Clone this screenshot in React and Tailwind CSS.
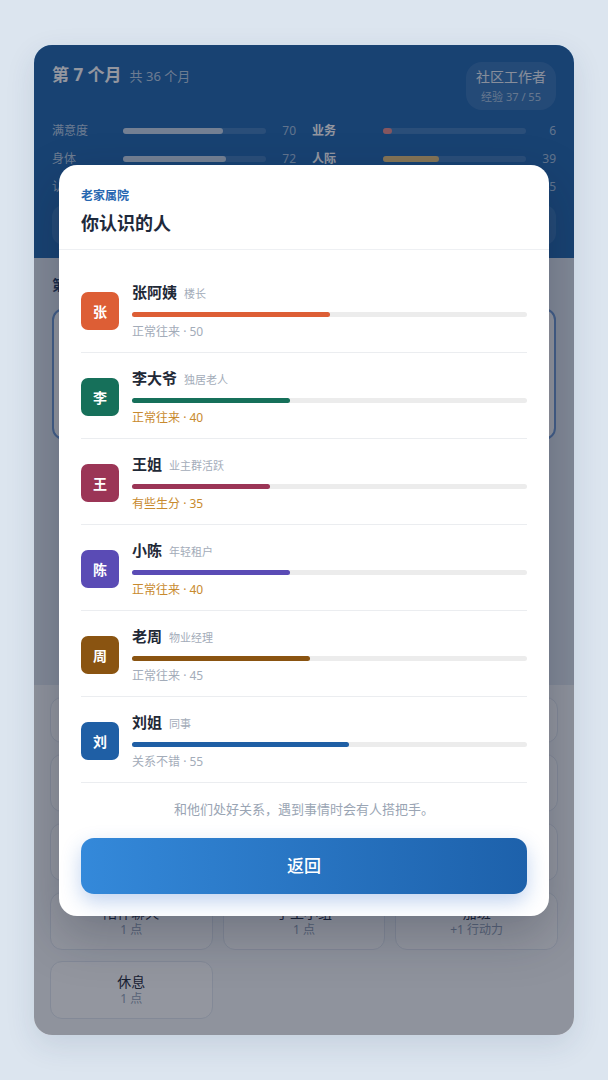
import React from "react";

const people = [
  { ch: "张", name: "张阿姨", role: "楼长", color: "#dd5e35", v: 50, status: "正常往来", warn: false },
  { ch: "李", name: "李大爷", role: "独居老人", color: "#16705a", v: 40, status: "正常往来", warn: true },
  { ch: "王", name: "王姐", role: "业主群活跃", color: "#9b3556", v: 35, status: "有些生分", warn: true },
  { ch: "陈", name: "小陈", role: "年轻租户", color: "#5a4bb5", v: 40, status: "正常往来", warn: true },
  { ch: "周", name: "老周", role: "物业经理", color: "#8a5411", v: 45, status: "正常往来", warn: false },
  { ch: "刘", name: "刘姐", role: "同事", color: "#1f5fa5", v: 55, status: "关系不错", warn: false },
];

const stats = [
  { l: "满意度", v: 70, fill: "bg-white/70", bold: false },
  { l: "业务", v: 6, fill: "bg-[#e58a8a]", bold: true },
  { l: "身体", v: 72, fill: "bg-white/70", bold: false },
  { l: "人际", v: 39, fill: "bg-[#e3c27a]", bold: true },
  { l: "认可", v: 60, fill: "bg-white/70", bold: false },
  { l: "心情", v: 45, fill: "bg-white/70", bold: true },
];

const actions = [
  ["走访居民", "1 点", "h-[46px]"],
  ["处理投诉", "1 点", "h-[46px]"],
  ["整理台账", "1 点", "h-[46px]"],
  ["组织活动", "2 点", "h-[58px]"],
  ["上门调解", "1 点", "h-[58px]"],
  ["环境整治", "1 点", "h-[58px]"],
  ["参加培训", "1 点", "h-[58px]"],
  ["政策宣传", "1 点", "h-[58px]"],
  ["写材料", "1 点", "h-[58px]"],
  ["陪伴聊天", "1 点", "h-[58px]"],
  ["手工小组", "1 点", "h-[58px]"],
  ["加班", "+1 行动力", "h-[58px]"],
  ["休息", "1 点", "h-[58px]"],
];

export default function App() {
  return (
    <div
      className="min-h-screen bg-[#dce5ef] pt-[45px] px-[34px] pb-[45px]"
      style={{ fontFamily: '"Noto Sans", "Noto Sans CJK SC", sans-serif' }}
    >
      <div className="relative h-[990px] rounded-[18px] overflow-hidden bg-[#f8fafc] shadow-[0_10px_30px_rgba(30,60,100,0.12)] flex flex-col">
        {/* header */}
        <div className="bg-[#2066ae] pt-[17px] px-[18px] pb-[13px] text-white">
          <div className="flex justify-between items-start">
            <div className="flex items-baseline leading-[26px]">
              <span className="text-[17px] font-bold">第 7 个月</span>
              <span className="text-[13px] text-white/70 ml-[8px]">共 36 个月</span>
            </div>
            <div className="h-[48px] w-[90px] rounded-[16px] bg-white/10 flex flex-col items-center justify-center">
              <div className="text-[14px] leading-[20px] text-white/90">社区工作者</div>
              <div className="text-[11px] leading-[16px] text-white/60 mt-[2px]">经验 37 / 55</div>
            </div>
          </div>
          <div className="mt-[11px] grid grid-cols-2 gap-x-[16px] gap-y-[8px]">
            {stats.map((s) => (
              <div key={s.l} className="flex items-center h-[20px] text-[12px]">
                <div className={`w-[71px] ${s.bold ? "font-bold text-white" : "text-white/70"}`}>{s.l}</div>
                <div className="flex-1 h-[6px] rounded-full bg-white/15">
                  <div className={`h-full rounded-full ${s.fill}`} style={{ width: `${Math.max(s.v, 5)}%` }} />
                </div>
                <div className="w-[30px] text-right text-white/60">{s.v}</div>
              </div>
            ))}
          </div>
          <div className="mt-[8px] h-[40px] rounded-[12px] bg-white/10" />
        </div>

        {/* middle */}
        <div className="h-[427px] bg-[#e1e8f1] pt-[17px] px-[18px]">
          <div className="text-[14px] font-bold leading-[20px] text-[#1e3a5f]">第 7 个月 · 本月事件</div>
          <div className="mt-[13px] h-[132px] rounded-[12px] border-2 border-[#6d9ad6] bg-white" />
        </div>

        {/* bottom actions */}
        <div className="flex-1 bg-[#f8fafc] pt-[12px] px-[16px] grid grid-cols-3 gap-x-[10px] gap-y-[11px] content-start">
          {actions.map(([t, s, h]) => (
            <div key={t} className={`${h} rounded-[12px] border border-[#e2e8f0] bg-white flex flex-col items-center justify-center`}>
              <div className="text-[14px] leading-[18px] text-[#1e293b]">{t}</div>
              <div className="text-[12px] leading-[16px] text-[#94a3b8]">{s}</div>
            </div>
          ))}
        </div>

        {/* overlay */}
        <div className="absolute inset-0 bg-[rgba(15,23,42,0.45)] flex items-center justify-center px-[25px]">
          <div className="w-full bg-white rounded-[18px] shadow-[0_20px_50px_rgba(15,23,42,0.25)] px-[22px] pt-[22px] pb-[22px]">
            <div className="text-[12px] leading-[18px] font-bold text-[#2767b1]">老家属院</div>
            <div className="mt-[5px] text-[18px] leading-[26px] font-bold text-[#1e293b]">你认识的人</div>
            <div className="mt-[13px] -mx-[22px] h-px bg-[#eef0f3]" />
            <div className="pt-[17px]">
              {people.map((p) => (
                <div key={p.ch} className="flex items-center gap-[13px] pt-[15px] pb-[11px] border-b border-[#ebedf0]">
                  <div
                    className="w-[38px] h-[38px] rounded-[7px] flex items-center justify-center text-white text-[14px] font-bold shrink-0"
                    style={{ backgroundColor: p.color }}
                  >
                    {p.ch}
                  </div>
                  <div className="flex-1">
                    <div className="flex items-baseline h-[20px] leading-[20px]">
                      <span className="text-[15px] font-bold text-[#1f2937]">{p.name}</span>
                      <span className="ml-[7px] text-[11px] text-[#a3acb9]">{p.role}</span>
                    </div>
                    <div className="mt-[10px] h-[5px] rounded-full bg-[#ececec]">
                      <div className="h-full rounded-full" style={{ width: `${p.v}%`, backgroundColor: p.color }} />
                    </div>
                    <div className={`mt-[6px] text-[12px] leading-[18px] ${p.warn ? "text-[#c88a2e]" : "text-[#a3acb9]"}`}>
                      {p.status} · {p.v}
                    </div>
                  </div>
                </div>
              ))}
            </div>
            <div className="mt-[16px] text-center text-[13px] leading-[20px] text-[#9aa5b4]">
              和他们处好关系，遇到事情时会有人搭把手。
            </div>
            <button className="mt-[19px] w-full h-[56px] rounded-[13px] bg-gradient-to-r from-[#3489da] to-[#1d61ab] text-white text-[17px] font-medium shadow-[0_8px_20px_rgba(37,99,200,0.28)]">
              返回
            </button>
          </div>
        </div>
      </div>
    </div>
  );
}
